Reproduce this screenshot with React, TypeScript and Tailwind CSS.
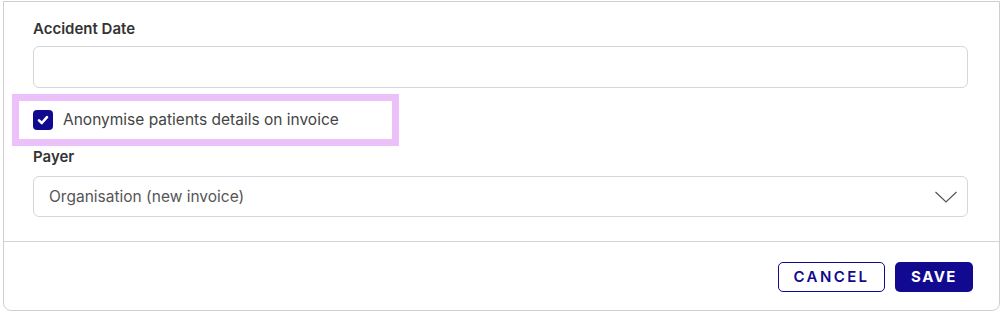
import React from 'react';

const font = { fontFamily: 'Inter, "Noto Sans", sans-serif' };

export default function App() {
  return (
    <div className="w-[1002px] h-[314px] bg-white pt-px pl-[3px] pr-[2px]" style={font}>
      <div className="w-[997px] h-[310px] border border-[#cfcfcf] rounded-b-lg flex flex-col">
        <div className="px-[29px] pt-[17px]">
          <label className="block text-[15px] leading-[20px] font-semibold text-[#333]">Accident Date</label>
          <input
            type="text"
            className="mt-[7px] block w-[935px] h-[42px] rounded-md border border-[#d3d6db] bg-white outline-none"
          />
          <div className="mt-[6px] -ml-[21px] w-[387px] h-[52px] border-[7px] border-[#ecc0f8] flex items-center pl-[14px] gap-[10px]">
            <span className="w-[20px] h-[20px] rounded-[4px] bg-[#11098f] flex items-center justify-center">
              <svg width="14" height="14" viewBox="0 0 14 14" fill="none">
                <path d="M3 7.4 5.8 10 11 4.2" stroke="white" strokeWidth="2.6" strokeLinecap="round" strokeLinejoin="round" />
              </svg>
            </span>
            <span className="text-[15.5px] text-[#444]">Anonymise patients details on invoice</span>
          </div>
          <label className="mt-[1px] block text-[15px] leading-[20px] font-semibold text-[#333]">Payer</label>
          <div className="mt-[9px] w-[935px] h-[41px] rounded-md border border-[#d3d6db] flex items-center justify-between pl-[15px] pr-[9px]">
            <span className="text-[15.5px] text-[#555]">Organisation (new invoice)</span>
            <svg width="24" height="14" viewBox="0 0 24 14" fill="none">
              <path d="M1.5 2 12 12 22.5 2" stroke="#555" strokeWidth="1.2" />
            </svg>
          </div>
        </div>
        <div className="mt-[24px] border-t border-[#d3d3d3]" />
        <div className="flex justify-end gap-[10px] pr-[26px] pt-[20px]">
          <button className="w-[107px] h-[30px] rounded-[5px] border border-[#11098f] text-[#11098f] text-[15px] font-semibold tracking-[0.16em] bg-white">
            CANCEL
          </button>
          <button className="w-[78px] h-[30px] rounded-[5px] bg-[#11098f] text-white text-[15px] font-bold tracking-[0.1em]">
            SAVE
          </button>
        </div>
      </div>
    </div>
  );
}
